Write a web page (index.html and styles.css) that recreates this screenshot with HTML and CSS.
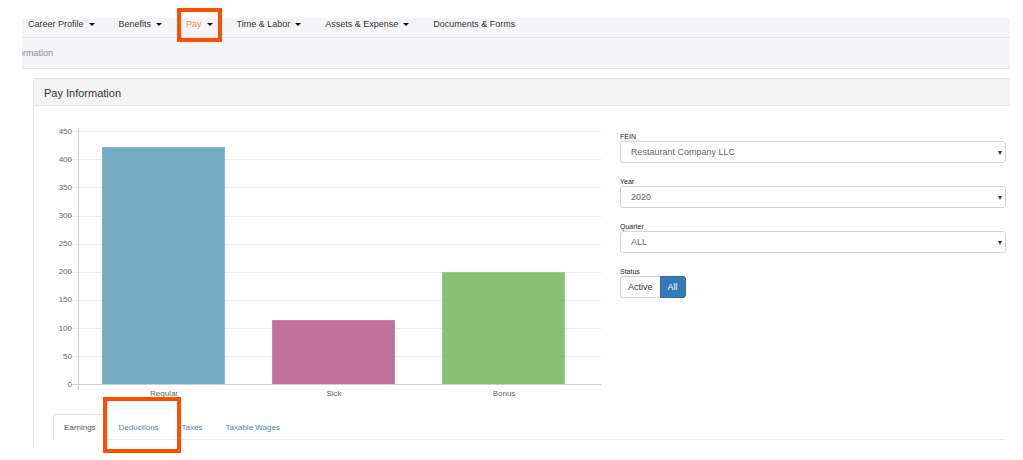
FILE: index.html
```html
<!DOCTYPE html>
<html lang="en">
<head>
<meta charset="utf-8">
<title>Pay Information</title>
<link rel="stylesheet" href="styles.css">
</head>
<body>
<div class="page">
  <nav class="nav">
    <a class="nav-item has-menu" href="#">Career Profile</a>
    <a class="nav-item has-menu" href="#">Benefits</a>
    <a class="nav-item has-menu active marked" href="#">Pay</a>
    <a class="nav-item has-menu" href="#">Time &amp; Labor</a>
    <a class="nav-item has-menu" href="#">Assets &amp; Expense</a>
    <a class="nav-item" href="#">Documents &amp; Forms</a>
  </nav>
  <div class="crumbs"><span class="crumb">ormation</span></div>

  <main class="panel">
    <h1 class="panel-title">Pay Information</h1>
    <div class="panel-body">
      <div class="columns">
        <svg class="chart" viewBox="0 0 549 280" role="img" aria-label="Regular, Sick, Bonus">
          <g class="grid">
            <path d="M19 11.5H548M19 39.5H548M19 67.5H548M19 96.5H548M19 124.5H548M19 152.5H548M19 180.5H548M19 208.5H548M19 236.5H548"/>
          </g>
          <rect class="bar-regular" x="49.5" y="27.5" width="122" height="237"/>
          <rect class="bar-sick" x="219.5" y="200.5" width="122" height="64"/>
          <rect class="bar-bonus" x="389.5" y="152.5" width="122" height="112"/>
          <path class="axis" d="M19 264.5H548M25.5 8V270"/>
          <g class="ticks">
            <text x="19" y="14">450</text>
            <text x="19" y="42">400</text>
            <text x="19" y="70">350</text>
            <text x="19" y="98">300</text>
            <text x="19" y="126">250</text>
            <text x="19" y="154">200</text>
            <text x="19" y="182">150</text>
            <text x="19" y="211">100</text>
            <text x="19" y="239">50</text>
            <text x="19" y="267">0</text>
          </g>
          <g class="names">
            <text x="111" y="276">Regular</text>
            <text x="281" y="276">Sick</text>
            <text x="451" y="276">Bonus</text>
          </g>
        </svg>

        <form class="filters">
          <div class="field">
            <label for="fein">FEIN</label>
            <div class="select-wrap"><select id="fein"><option>Restaurant Company LLC</option></select></div>
          </div>
          <div class="field">
            <label for="year">Year</label>
            <div class="select-wrap"><select id="year"><option>2020</option></select></div>
          </div>
          <div class="field">
            <label for="quarter">Quarter</label>
            <div class="select-wrap"><select id="quarter"><option>ALL</option></select></div>
          </div>
          <div class="field">
            <span class="label" id="status">Status</span>
            <div class="toggle" role="group" aria-labelledby="status">
              <button type="button">Active</button>
              <button type="button" class="on" aria-pressed="true">All</button>
            </div>
          </div>
        </form>
      </div>

      <div class="tabs">
        <a class="tab current" href="#">Earnings</a>
        <a class="tab marked" href="#">Deductions</a>
        <a class="tab" href="#">Taxes</a>
        <a class="tab" href="#">Taxable Wages</a>
      </div>
    </div>
  </main>
</div>
</body>
</html>
```

FILE: styles.css
```css
* {
  box-sizing: border-box;
}

body {
  margin: 0;
  background: #fff;
  color: #333;
  font: 9px/13px "Liberation Sans", Arial, sans-serif;
}

a {
  color: #428bca;
  text-decoration: none;
}

.page {
  padding: 18px 13px 14px 22px;
}

/* Navigation */
.nav {
  display: flex;
  gap: 24px;
  padding-left: 6px;
  background: #f5f5f8;
  border-bottom: 1px solid #e4e5e8;
}

.nav-item {
  display: flex;
  align-items: center;
  gap: 5px;
  padding-bottom: 6px;
  color: #333;
}

.nav-item.active {
  color: #ff8c3a;
}

.has-menu::after {
  content: "";
  border: 3px solid transparent;
  border-top-color: #111;
  border-bottom: 0;
}

.crumbs {
  display: flex;
  align-items: center;
  height: 31px;
  overflow: hidden;
  background: #f5f5f8;
  border-bottom: 1px solid #e4e5e8;
}

.crumb {
  margin-left: -4px;
  color: #8b8c90;
}

/* Panel */
.panel {
  margin: 9px 0 0 11px;
  border: solid #e4e4e4;
  border-width: 1px 0 0 1px;
  border-top-left-radius: 3px;
}

.panel-title {
  margin: 0;
  padding: 8px 10px 5px;
  background: #f4f4f4;
  border-bottom: 1px solid #e8e8e8;
  font-size: 11px;
  font-weight: 400;
  line-height: 13px;
}

.panel-body {
  padding: 14px 4px 6px 19px;
}

.columns {
  display: grid;
  grid-template-columns: 549fr 386fr;
  gap: 18px;
}

/* Chart */
.chart {
  display: block;
  width: 100%;
  font-size: 8px;
}

.grid,
.axis {
  fill: none;
  stroke: #ececec;
}

.axis {
  stroke: #cfcfcf;
}

.bar-regular {
  fill: #72abbf;
  stroke: #82b8c9;
}

.bar-sick {
  fill: #bf7199;
  stroke: #cb82a8;
}

.bar-bonus {
  fill: #87bf73;
  stroke: #97cb85;
}

.ticks,
.names {
  fill: #666;
}

.ticks {
  text-anchor: end;
}

.names {
  text-anchor: middle;
}

/* Filters */
.filters {
  display: flex;
  flex-direction: column;
  gap: 14px;
  padding-top: 12px;
}

.field label,
.field .label {
  display: block;
  color: #222;
  font-size: 7px;
  line-height: 9px;
}

.select-wrap {
  position: relative;
}

.select-wrap::after {
  content: "";
  position: absolute;
  top: 10px;
  right: 4px;
  border: 2px solid transparent;
  border-top: 4px solid #333;
  border-bottom: 0;
  pointer-events: none;
}

select {
  display: block;
  width: 100%;
  height: 22px;
  padding: 1px 10px 0;
  appearance: none;
  background: #fff;
  border: 1px solid #d4d4d4;
  border-radius: 3px;
  color: #666;
  font: inherit;
}

.toggle {
  display: flex;
}

button {
  height: 22px;
  padding: 1px 7px 0;
  background: #fff;
  border: 1px solid #d4d4d4;
  border-right: 0;
  border-radius: 3px 0 0 3px;
  color: #333;
  font: inherit;
}

button.on {
  background: #337ab7;
  border: 1px solid #2e6da4;
  border-radius: 0 3px 3px 0;
  color: #fff;
}

/* Tabs */
.tabs {
  display: flex;
  gap: 1px;
  margin-top: 14px;
  border-bottom: 1px solid #ececec;
  font-size: 8px;
}

.tab {
  padding: 6px 10px 5px;
  border: 1px solid transparent;
  border-bottom: 0;
}

.tab.current {
  margin-bottom: -1px;
  padding-bottom: 6px;
  background: #fff;
  border-color: #e2e2e2;
  border-radius: 3px 3px 0 0;
  color: #555;
}

/* Callout frames */
.marked {
  position: relative;
}

.marked::before {
  content: "";
  position: absolute;
  border: 4px solid #ff4e00;
}

.nav-item.marked::before {
  inset: -10px -9px -5px;
}

.tab.marked::before {
  inset: -18px -12px -14px -6px;
}
```
